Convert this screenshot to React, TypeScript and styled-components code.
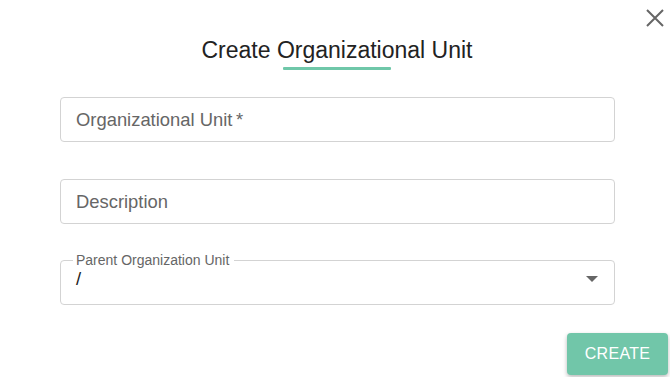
import React from "react";
import styled, { createGlobalStyle } from "styled-components";

const Global = createGlobalStyle`
  html, body { margin: 0; padding: 0; background: #ffffff; }
  body { font-family: "Liberation Sans", Arial, sans-serif; }
  * { box-sizing: border-box; }
`;

const Dialog = styled.div`
  position: relative;
  width: 670px;
  height: 377px;
  background: #ffffff;
  display: flex;
  flex-direction: column;
  overflow: hidden;
`;

const CloseButton = styled.button`
  position: absolute;
  top: 8px;
  right: 5px;
  width: 20px;
  height: 20px;
  padding: 0;
  border: none;
  background: transparent;
  cursor: pointer;
  display: flex;
  align-items: center;
  justify-content: center;
`;

const Header = styled.div`
  padding-top: 37px;
  padding-left: 4px;
  display: flex;
  flex-direction: column;
  align-items: center;
`;

const Title = styled.h2`
  margin: 0;
  font-size: 23px;
  line-height: 26px;
  font-weight: 400;
  color: #222222;
`;

const Underline = styled.div`
  margin-top: 4px;
  width: 108px;
  height: 3px;
  border-radius: 1px;
  background: #6fc7a9;
`;

const Form = styled.div`
  margin-top: 27px;
  padding: 0 55px 0 60px;
  display: flex;
  flex-direction: column;
`;

const TextField = styled.div<{ $gap: number }>`
  margin-top: ${(p) => p.$gap}px;
  height: 45px;
  border: 1px solid #d3d3d3;
  border-radius: 4px;
  padding: 0 15px;
  display: flex;
  align-items: center;
  font-size: 18.4px;
  color: #666666;
`;

const Select = styled.fieldset`
  margin: 28px 0 0 0;
  height: 53px;
  border: 1px solid #d3d3d3;
  border-radius: 4px;
  padding: 0 16px 5px 15px;
  display: flex;
  align-items: center;
  justify-content: space-between;
  min-width: 0;
`;

const Legend = styled.legend`
  margin-left: -3px;
  padding: 0 5px 0 3px;
  font-size: 14px;
  line-height: 16px;
  color: #666666;
`;

const SelectValue = styled.span`
  font-size: 18.4px;
  color: #222222;
`;

const Footer = styled.div`
  margin-top: 28px;
  padding-right: 2px;
  display: flex;
  justify-content: flex-end;
`;

const CreateButton = styled.button`
  width: 101px;
  height: 42px;
  border: none;
  border-radius: 4px;
  background: #71c6a9;
  color: #ffffff;
  font-family: "Liberation Sans", Arial, sans-serif;
  font-size: 16px;
  letter-spacing: 0.3px;
  box-shadow: 0 2px 4px rgba(0, 0, 0, 0.28);
  cursor: pointer;
`;

export default function App() {
  return (
    <>
      <Global />
      <Dialog>
        <CloseButton aria-label="close">
          <svg width="18" height="18" viewBox="0 0 18 18">
            <path d="M1 1 L17 17 M17 1 L1 17" stroke="#666" strokeWidth="2" fill="none" />
          </svg>
        </CloseButton>
        <Header>
          <Title>Create Organizational Unit</Title>
          <Underline />
        </Header>
        <Form>
          <TextField $gap={0}>Organizational Unit{"\u2009"}*</TextField>
          <TextField $gap={37}>Description</TextField>
          <Select>
            <Legend>Parent Organization Unit</Legend>
            <SelectValue>/</SelectValue>
            <svg width="12" height="6" viewBox="0 0 12 6">
              <path d="M0 0 L12 0 L6 6 Z" fill="#666" />
            </svg>
          </Select>
        </Form>
        <Footer>
          <CreateButton>CREATE</CreateButton>
        </Footer>
      </Dialog>
    </>
  );
}
